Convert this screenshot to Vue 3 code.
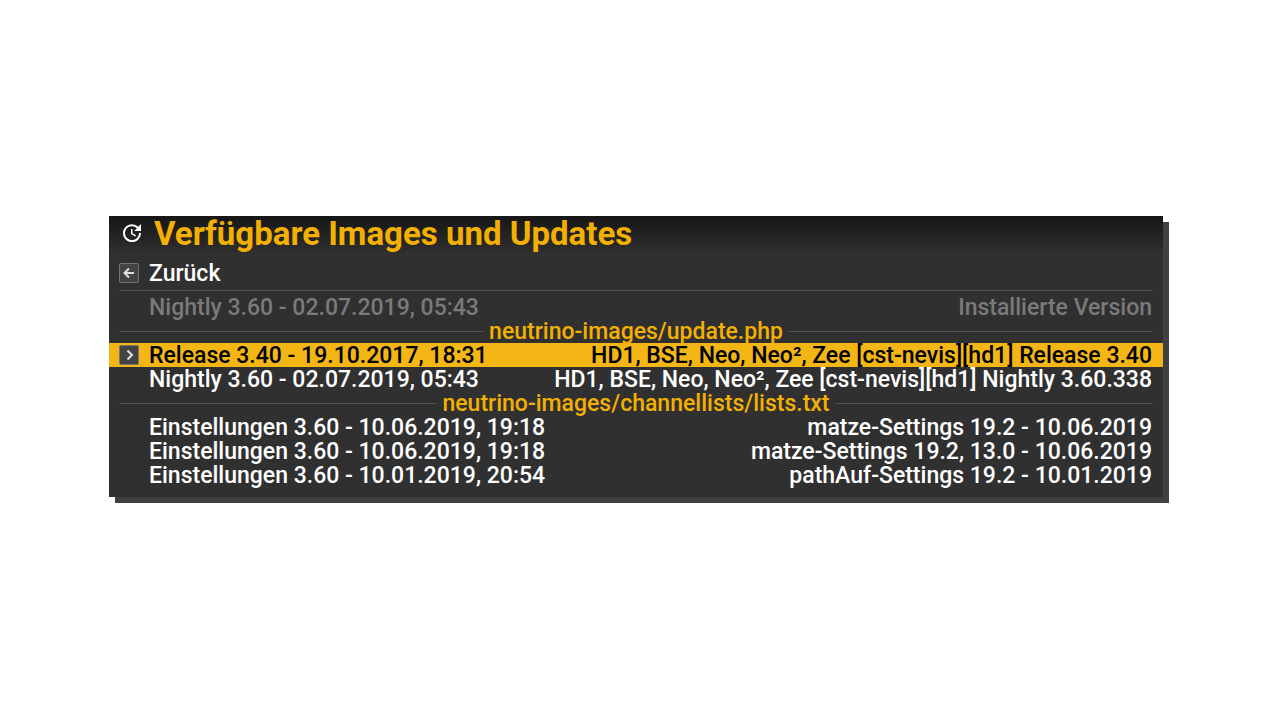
<script setup>
import { ref } from 'vue'

const entries = [
  { label: 'Zurück', icon: 'back' },
  { kind: 'line' },
  { label: 'Nightly 3.60 - 02.07.2019, 05:43', value: 'Installierte Version', disabled: true },
  { kind: 'section', label: 'neutrino-images/update.php' },
  { label: 'Release 3.40 - 19.10.2017, 18:31', value: 'HD1, BSE, Neo, Neo², Zee [cst-nevis][hd1] Release 3.40' },
  { label: 'Nightly 3.60 - 02.07.2019, 05:43', value: 'HD1, BSE, Neo, Neo², Zee [cst-nevis][hd1] Nightly 3.60.338' },
  { kind: 'section', label: 'neutrino-images/channellists/lists.txt' },
  { label: 'Einstellungen 3.60 - 10.06.2019, 19:18', value: 'matze-Settings 19.2 - 10.06.2019' },
  { label: 'Einstellungen 3.60 - 10.06.2019, 19:18', value: 'matze-Settings 19.2, 13.0 - 10.06.2019' },
  { label: 'Einstellungen 3.60 - 10.01.2019, 20:54', value: 'pathAuf-Settings 19.2 - 10.01.2019' }
]
const selected = ref(4)
</script>

<template>
  <main class="screen">
    <section class="panel" aria-labelledby="menu-title">
      <header class="head">
        <svg class="head-icon" viewBox="0 0 24 24" aria-hidden="true">
          <path fill="currentColor" d="M21 10.12h-6.78l2.74-2.82c-2.73-2.7-7.15-2.8-9.88-.1-2.73 2.71-2.73 7.08 0 9.79s7.15 2.71 9.88 0C18.32 15.65 19 14.08 19 12.1h2c0 1.98-.88 4.55-2.64 6.29-3.51 3.48-9.21 3.48-12.72 0-3.5-3.47-3.53-9.11-.02-12.58s9.14-3.47 12.65 0L21 3v7.12zM12.5 8v4.25l3.5 2.08-.72 1.21L11 13V8h1.5z" />
        </svg>
        <h1 id="menu-title" class="title">Verfügbare Images und Updates</h1>
      </header>
      <div class="list">
        <template v-for="(entry, i) in entries" :key="i">
          <hr v-if="entry.kind === 'line'" class="line" />
          <h2 v-else-if="entry.kind === 'section'" class="section">{{ entry.label }}</h2>
          <button
            v-else
            type="button"
            class="row"
            :class="{ selected: selected === i }"
            :disabled="entry.disabled"
            @click="selected = i"
          >
            <span class="slot">
              <svg v-if="entry.icon || selected === i" class="key" viewBox="0 0 20 20" aria-hidden="true">
                <rect x="0.5" y="0.5" width="19" height="19" rx="1" fill="#434343" stroke="#757575" />
                <path v-if="entry.icon" d="M15 10H6M10 5.5L5.5 10L10 14.5" fill="none" stroke="#e0e0e0" stroke-width="2" />
                <path v-else d="M8.5 5.5L13 10L8.5 14.5" fill="none" stroke="#e0e0e0" stroke-width="2" />
              </svg>
            </span>
            <span class="label">{{ entry.label }}</span>
            <span class="value">{{ entry.value }}</span>
          </button>
        </template>
      </div>
    </section>
  </main>
</template>

<style>
body {
  background: #fff;
}
</style>

<style scoped>
.screen {
  box-sizing: border-box;
  min-height: 100vh;
  padding: 216px 117px 0 109px;
  font-family: Roboto, "Liberation Sans", sans-serif;
  font-weight: 500;
}
.panel {
  padding-bottom: 10px;
  background: #303030;
  box-shadow: 6px 6px 0 #404040;
}
.head {
  display: flex;
  align-items: center;
  gap: 10px;
  height: 34px;
  padding: 0 11px 2px;
  background: linear-gradient(#161616, #2e2e2e);
}
.head-icon {
  width: 24px;
  height: 24px;
  color: #fff;
}
.title {
  margin: 0;
  color: #f3b000;
  font-size: 33px;
  font-weight: 700;
  line-height: 35px;
  white-space: nowrap;
}
.list {
  padding-top: 9px;
}
.row {
  display: flex;
  align-items: center;
  width: 100%;
  height: 24px;
  padding: 0 11px 0 10px;
  border: 0;
  background: none;
  color: #fff;
  font: inherit;
  font-size: 23px;
  line-height: 25px;
  white-space: nowrap;
  text-align: left;
}
.row:disabled {
  color: #7a7a7a;
}
.row.selected {
  background: #f3b615;
  color: #000;
}
.slot {
  display: flex;
  width: 30px;
}
.key {
  width: 20px;
  height: 20px;
}
.value {
  margin-left: auto;
}
.line {
  height: 1px;
  margin: 5px 10px 4px;
  border: 0;
  background: #505050;
}
.section {
  display: flex;
  align-items: center;
  gap: 5px;
  height: 24px;
  margin: 0 10px;
  color: #f3b000;
  font-size: 23px;
  font-weight: 500;
  line-height: 25px;
}
.section::before,
.section::after {
  content: "";
  flex: 1;
  height: 1px;
  background: #505050;
}
</style>
